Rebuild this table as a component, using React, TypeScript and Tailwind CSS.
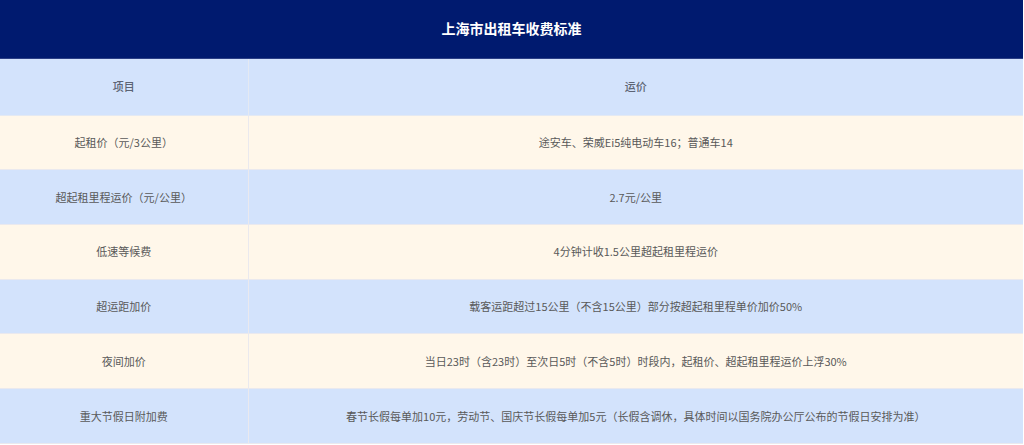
import React from "react";

type Row = {
  item: string;
  price: string;
};

const rows: Row[] = [
  { item: "起租价（元/3公里）", price: "途安车、荣威Ei5纯电动车16；普通车14" },
  { item: "超起租里程运价（元/公里）", price: "2.7元/公里" },
  { item: "低速等候费", price: "4分钟计收1.5公里超起租里程运价" },
  { item: "超运距加价", price: "载客运距超过15公里（不含15公里）部分按超起租里程单价加价50%" },
  { item: "夜间加价", price: "当日23时（含23时）至次日5时（不含5时）时段内，起租价、超起租里程运价上浮30%" },
  {
    item: "重大节假日附加费",
    price:
      "春节长假每单加10元，劳动节、国庆节长假每单加5元（长假含调休，具体时间以国务院办公厅公布的节假日安排为准）",
  },
];

export default function App() {
  return (
    <div
      className="w-[1024px] h-[445px] overflow-hidden bg-white"
      style={{ fontFamily: '"Noto Sans CJK SC", "Liberation Sans", sans-serif' }}
    >
      <table className="w-[1023px] border-collapse table-fixed">
        <colgroup>
          <col className="w-[248px]" />
          <col />
        </colgroup>
        <thead>
          <tr>
            <th
              colSpan={2}
              className="h-[58px] bg-[#001a6f] text-white text-[14px] font-bold text-center border-b border-[#2b3f86]"
            >
              上海市出租车收费标准
            </th>
          </tr>
          <tr className="bg-[#d3e3fc]">
            <th className="h-[57px] text-[11px] font-medium text-[#5c6373] border-r border-b border-[#e4e9f2]">
              项目
            </th>
            <th className="h-[57px] text-[11px] font-medium text-[#5c6373] border-b border-[#e4e9f2]">
              运价
            </th>
          </tr>
        </thead>
        <tbody>
          {rows.map((row, i) => (
            <tr key={row.item} className={i % 2 === 0 ? "bg-[#fff7ea]" : "bg-[#d3e3fc]"}>
              <td className="h-[54.7px] text-center text-[11px] text-[#595959] border-r border-b border-[#eae9ee]">
                {row.item}
              </td>
              <td className="h-[54.7px] text-center text-[11px] text-[#595959] border-b border-[#eae9ee]">
                {row.price}
              </td>
            </tr>
          ))}
        </tbody>
      </table>
    </div>
  );
}
